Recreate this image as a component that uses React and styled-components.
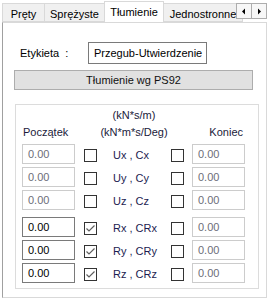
import React from "react";
import styled, { createGlobalStyle } from "styled-components";

const GlobalStyle = createGlobalStyle`
  html, body {
    margin: 0;
    padding: 0;
    background: #ffffff;
  }
  body {
    font-family: "Liberation Sans", Arial, sans-serif;
    font-size: 11px;
    color: #000;
  }
`;

const Window = styled.div`
  width: 269px;
  height: 299px;
  background: #fff;
  position: relative;
  overflow: hidden;
`;

const TabStrip = styled.div`
  position: relative;
  height: 22px;
  display: flex;
  align-items: flex-end;
  padding-left: 3px;
  overflow: hidden;
`;

const Tab = styled.div`
  flex: none;
  box-sizing: border-box;
  width: ${(p) => p.$w}px;
  height: ${(p) => (p.$active ? 22 : 19)}px;
  margin-bottom: ${(p) => (p.$active ? -1 : 0)}px;
  padding-top: 4px;
  text-align: center;
  background: ${(p) => (p.$active ? "#fff" : "#f0f0f0")};
  border: 1px solid #d9d9d9;
  border-bottom: ${(p) => (p.$active ? "none" : "1px solid #d9d9d9")};
  margin-left: -1px;
  position: relative;
  z-index: ${(p) => (p.$active ? 2 : 1)};
  white-space: nowrap;
  color: #000;
`;

const Spinner = styled.div`
  position: absolute;
  right: 2px;
  top: 3px;
  display: flex;
  z-index: 3;
`;

const SpinButton = styled.div`
  width: 16px;
  height: 16px;
  box-sizing: border-box;
  border: 1px solid #adadad;
  background: #f7f7f7;
  margin-left: -1px;
  display: flex;
  align-items: center;
  justify-content: center;
`;

const Panel = styled.div`
  box-sizing: border-box;
  margin-left: 2px;
  width: 265px;
  height: 276px;
  border: 1px solid #d9d9d9;
  border-left-color: #a0a0a0;
  padding: 19px 0 0 0;
`;

const LabelRow = styled.div`
  display: flex;
  align-items: center;
  height: 22px;
`;

const Label = styled.span`
  width: 85px;
  padding-left: 17px;
  box-sizing: border-box;
  color: #000;
`;

const TextBox = styled.div`
  box-sizing: border-box;
  width: ${(p) => p.$w}px;
  height: ${(p) => p.$h}px;
  border: 1px solid ${(p) => (p.$disabled ? "#cccccc" : "#7a7a7a")};
  color: ${(p) => (p.$disabled ? "#6d6d78" : "#000")};
  background: #fff;
  padding-left: 5px;
  display: flex;
  align-items: center;
  white-space: nowrap;
  overflow: hidden;
`;

const WideButton = styled.div`
  box-sizing: border-box;
  margin: 6px 0 0 11px;
  width: 239px;
  height: 20px;
  background: #e1e1e1;
  border: 1px solid #adadad;
  display: flex;
  align-items: center;
  justify-content: center;
  color: #111;
`;

const GroupBox = styled.div`
  box-sizing: border-box;
  margin: 14px 0 0 12px;
  width: 244px;
  height: 185px;
  border: 1px solid #dcdcdc;
  padding: 2px 0 0 6px;
`;

const Grid = styled.div`
  display: grid;
  grid-template-columns: 53px 22px 74px 21px 53px;
  grid-auto-rows: 20px;
  row-gap: 3px;
  align-items: center;
  margin-top: ${(p) => p.$gap || 0}px;
`;

const HeadRow = styled.div`
  display: grid;
  grid-template-columns: 53px 22px 74px 21px 53px;
  margin-bottom: 3px;
`;

const HeadLine = styled.div`
  grid-column: ${(p) => p.$col};
  text-align: ${(p) => p.$align || "center"};
  white-space: nowrap;
  line-height: 17px;
  padding-left: ${(p) => p.$pl || 0}px;
  padding-right: ${(p) => p.$pr || 0}px;
  align-self: end;
  color: #1a1a3a;
`;

const Box = styled.div`
  box-sizing: border-box;
  width: 13px;
  height: 13px;
  border: 1px solid #333333;
  background: #fff;
  justify-self: ${(p) => p.$justify};
  margin-top: 2px;
  display: flex;
  align-items: center;
  justify-content: center;
`;

const RowLabel = styled.div`
  padding-left: 16px;
  margin-top: 2px;
  white-space: nowrap;
  color: #1c1c50;
`;

const Check = () => (
  <svg width="11" height="11" viewBox="0 0 11 11">
    <path d="M1.5 5.5 L4 8 L9.5 2.5" fill="none" stroke="#5f5f5f" strokeWidth="1.2" />
  </svg>
);

const Arrow = ({ dir }) => (
  <svg width="6" height="7" viewBox="0 0 6 7">
    {dir === "left" ? (
      <path d="M4 0.5 L1 3.5 L4 6.5 Z" fill="#000" />
    ) : (
      <path d="M2 0.5 L5 3.5 L2 6.5 Z" fill="#000" />
    )}
  </svg>
);

const rows = [
  { label: "Ux , Cx", left: false, checked: false },
  { label: "Uy , Cy", left: false, checked: false },
  { label: "Uz , Cz", left: false, checked: false },
  { label: "Rx , CRx", left: true, checked: true },
  { label: "Ry , CRy", left: true, checked: true },
  { label: "Rz , CRz", left: true, checked: true },
];

const DofRow = ({ row }) => (
  <>
    <TextBox $w={53} $h={20} $disabled={!row.left}>
      0.00
    </TextBox>
    <Box $justify="end">{row.checked && <Check />}</Box>
    <RowLabel>{row.label}</RowLabel>
    <Box $justify="start" />
    <TextBox $w={53} $h={20} $disabled>
      0.00
    </TextBox>
  </>
);

export default function App() {
  return (
    <>
      <GlobalStyle />
      <Window>
        <TabStrip>
          <Tab $w={43}>Pręty</Tab>
          <Tab $w={61}>Sprężyste</Tab>
          <Tab $w={60} $active>
            Tłumienie
          </Tab>
          <Tab $w={80}>Jednostronne</Tab>
          <Spinner>
            <SpinButton>
              <Arrow dir="left" />
            </SpinButton>
            <SpinButton>
              <Arrow dir="right" />
            </SpinButton>
          </Spinner>
        </TabStrip>
        <Panel>
          <LabelRow>
            <Label>Etykieta&nbsp; :</Label>
            <TextBox $w={119} $h={22}>
              Przegub-Utwierdzenie
            </TextBox>
          </LabelRow>
          <WideButton>Tłumienie wg PS92</WideButton>
          <GroupBox>
            <HeadRow>
              <HeadLine $col="3">(kN*s/m)</HeadLine>
              <HeadLine $col="1" $align="left" $pl={1}>
                Początek
              </HeadLine>
              <HeadLine $col="3">(kN*m*s/Deg)</HeadLine>
              <HeadLine $col="5" $align="right" $pr={2}>
                Koniec
              </HeadLine>
            </HeadRow>
            <Grid>
              {rows.slice(0, 3).map((r) => (
                <DofRow key={r.label} row={r} />
              ))}
            </Grid>
            <Grid $gap={7}>
              {rows.slice(3).map((r) => (
                <DofRow key={r.label} row={r} />
              ))}
            </Grid>
          </GroupBox>
        </Panel>
      </Window>
    </>
  );
}
